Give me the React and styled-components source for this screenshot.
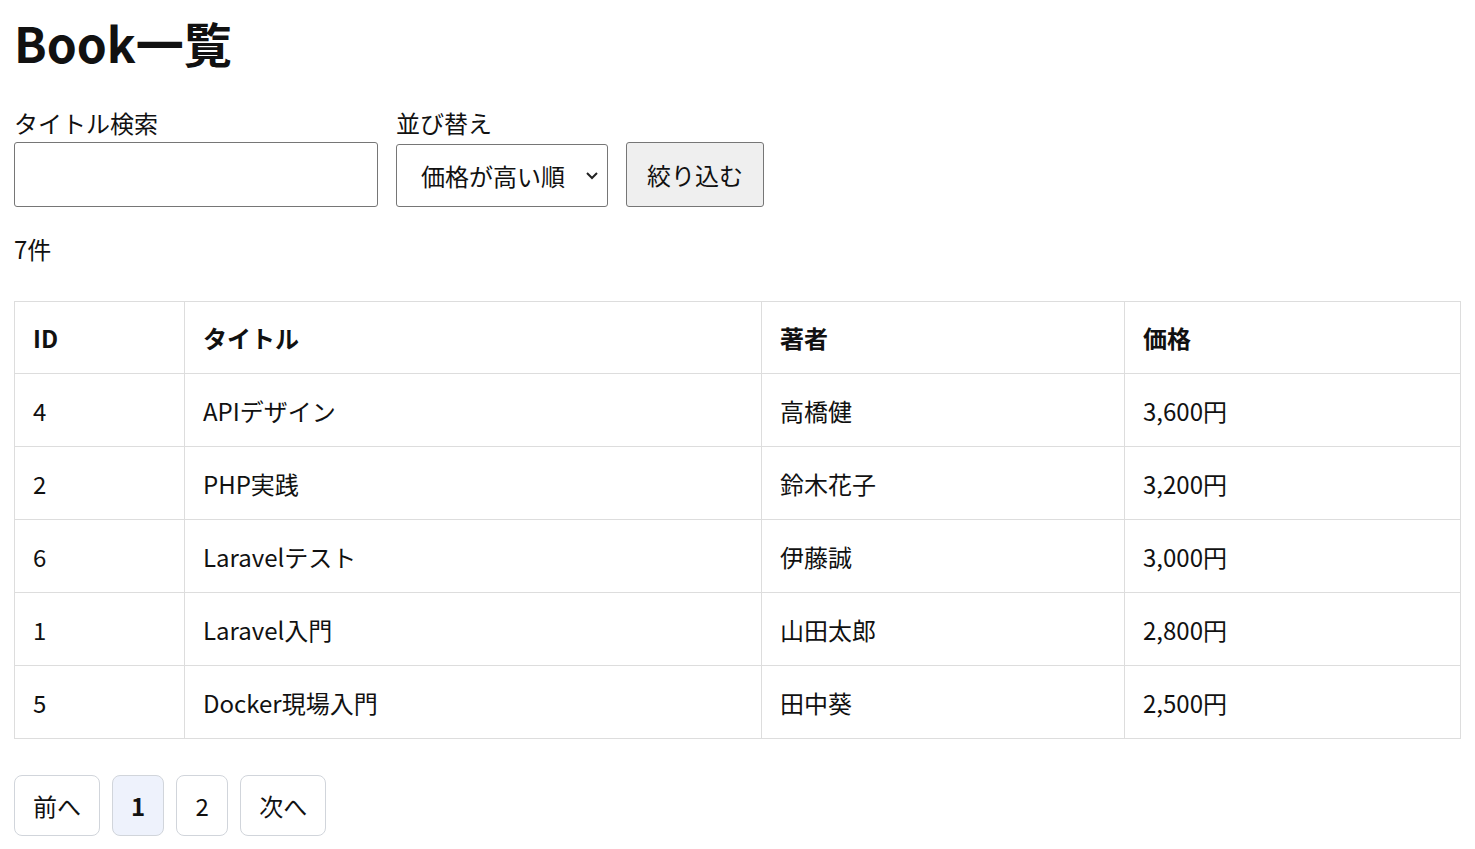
import React from "react";
import styled, { createGlobalStyle } from "styled-components";

const Global = createGlobalStyle`
  body { margin: 0; padding: 0 14px; font-family: "Noto Sans CJK JP", "Noto Sans", sans-serif; color: #111; font-size: 24px; background:#fff; }
`;
const Title = styled.h1`font-size: 48px; font-weight: 700; margin: 12px 0 36px; line-height: 60px;`;
const Form = styled.div`display:flex; align-items:flex-end; gap:18px;`;
const Field = styled.div`display:flex; flex-direction:column; gap:${p=>p.$gap}px;`;
const Label = styled.label`font-size:24px; line-height:30px;`;
const Input = styled.input`width:364px; height:65px; box-sizing:border-box; border:1px solid #767676; border-radius:3px; font-size:24px;`;
const SelectBox = styled.div`width:212px; height:63px; box-sizing:border-box; border:1px solid #767676; border-radius:3px; display:flex; align-items:center; padding:0 8px 0 24px; justify-content:space-between;`;
const Button = styled.button`height:65px; width:138px; box-sizing:border-box; border:1px solid #767676; border-radius:3px; background:#efefef; font:inherit; font-size:24px; color:#111;`;
const Count = styled.div`margin:26px 0 36px; line-height:32px;`;
const Table = styled.table`width:100%; border-collapse:collapse;`;
const Th = styled.th`border:1px solid #ddd; height:72px; box-sizing:border-box; padding:0 18px; text-align:left; font-weight:700; width:${p=>p.$w};`;
const Td = styled.td`border:1px solid #ddd; height:72px; padding:0 18px;`;
const Pager = styled.div`display:flex; gap:12px; margin-top:36px;`;
const PageBtn = styled.div`height:61px; min-width:52px; box-sizing:border-box; padding:0 18px; border:1px solid #d1d5db; border-radius:8px; display:flex; align-items:center; justify-content:center; background:${p=>p.$active?"#eef2fc":"#fff"}; font-weight:${p=>p.$active?700:400};`;

const rows=[["4","APIデザイン","高橋健","3,600円"],["2","PHP実践","鈴木花子","3,200円"],["6","Laravelテスト","伊藤誠","3,000円"],["1","Laravel入門","山田太郎","2,800円"],["5","Docker現場入門","田中葵","2,500円"]];

export default function App(){
  return <>
    <Global/>
    <Title>Book一覧</Title>
    <Form>
      <Field $gap={4}><Label>タイトル検索</Label><Input/></Field>
      <Field $gap={6}><Label>並び替え</Label>
        <SelectBox><span>価格が高い順</span>
          <svg width="14" height="10" viewBox="0 0 14 10"><path d="M2 2l5 5 5-5" fill="none" stroke="#222" strokeWidth="2"/></svg>
        </SelectBox>
      </Field>
      <Button>絞り込む</Button>
    </Form>
    <Count>7件</Count>
    <Table>
      <thead><tr><Th $w="170px">ID</Th><Th $w="577px">タイトル</Th><Th $w="363px">著者</Th><Th>価格</Th></tr></thead>
      <tbody>{rows.map(r=><tr key={r[0]}>{r.map((c,i)=><Td key={i}>{c}</Td>)}</tr>)}</tbody>
    </Table>
    <Pager>
      <PageBtn>前へ</PageBtn><PageBtn $active>1</PageBtn><PageBtn>2</PageBtn><PageBtn>次へ</PageBtn>
    </Pager>
  </>;
}
